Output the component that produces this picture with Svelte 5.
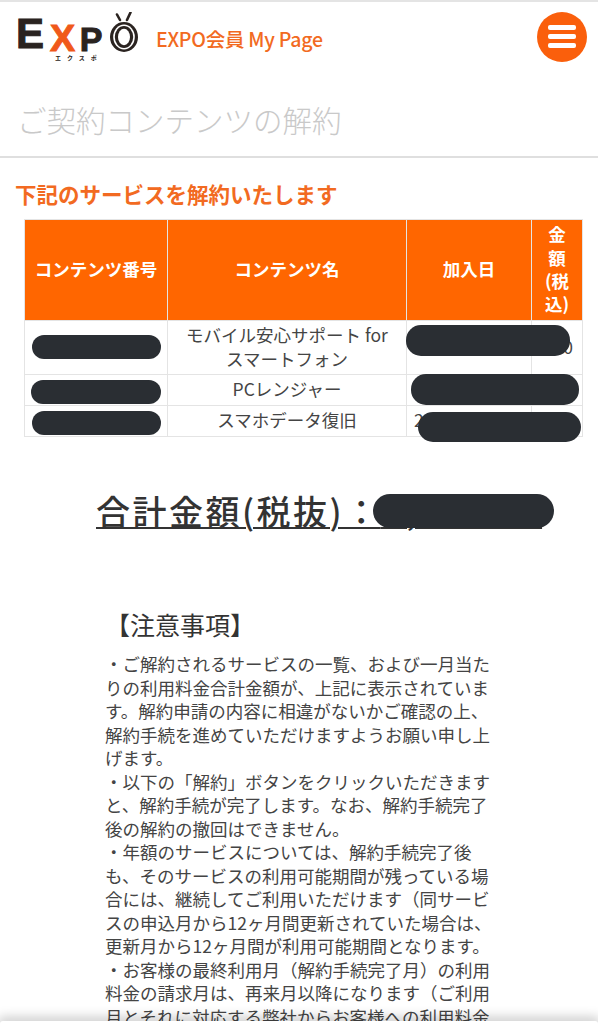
<script>
  const heads = ['コンテンツ番号', 'コンテンツ名', '加入日', '金額(税込)'];
  const rows = [
    { name: 'モバイル安心サポート for スマートフォン', date: '', price: '0', cls: 'tall' },
    { name: 'PCレンジャー', date: '', price: '', cls: 'short' },
    { name: 'スマホデータ復旧', date: '2', price: '', cls: 'short' }
  ];
  const notes = [
    '・ご解約されるサービスの一覧、および一月当たりの利用料金合計金額が、上記に表示されています。解約申請の内容に相違がないかご確認の上、解約手続を進めていただけますようお願い申し上げます。',
    '・以下の「解約」ボタンをクリックいただきますと、解約手続が完了します。なお、解約手続完了後の解約の撤回はできません。',
    '・年額のサービスについては、解約手続完了後も、そのサービスの利用可能期間が残っている場合には、継続してご利用いただけます（同サービスの申込月から12ヶ月間更新されていた場合は、更新月から12ヶ月間が利用可能期間となります。',
    '・お客様の最終利用月（解約手続完了月）の利用料金の請求月は、再来月以降になります（ご利用月とそれに対応する弊社からお客様への利用料金'
  ];
</script>

<div class="page">
  <header class="top">
    <div class="logo">
      <div class="word">
        <span class="l e">E</span><span class="l x">X</span><span class="l p">P</span>
        <svg class="o" width="28" height="40" viewBox="0 0 28 40" aria-hidden="true">
          <path d="M7 2.5L10 8M20.5 0.5L17 8" stroke="#2a2320" stroke-width="2.6" fill="none" stroke-linecap="round" />
          <ellipse cx="14" cy="25" rx="14" ry="15" fill="#2a2320" />
          <ellipse cx="14" cy="25" rx="10.8" ry="12.4" fill="#fff" />
          <ellipse cx="14" cy="25" rx="9.2" ry="11" fill="#2a2320" />
          <ellipse cx="14" cy="25" rx="6" ry="8.2" fill="#fff" />
        </svg>
      </div>
      <span class="kana">エクスポ</span>
    </div>
    <span class="mypage">EXPO会員 My Page</span>
    <button class="menu" aria-label="menu">
      <span></span><span></span><span></span>
    </button>
  </header>

  <h1 class="title">ご契約コンテンツの解約</h1>

  <h2 class="lead">下記のサービスを解約いたします</h2>

  <div class="table-wrap">
    <table>
      <colgroup>
        <col class="c1" /><col class="c2" /><col class="c3" /><col class="c4" />
      </colgroup>
      <thead>
        <tr>
          {#each heads as h}<th>{h}</th>{/each}
        </tr>
      </thead>
      <tbody>
        {#each rows as r}
          <tr class={r.cls}>
            <td></td>
            <td>{r.name}</td>
            <td class="date">{r.date}</td>
            <td class="price">{r.price}</td>
          </tr>
        {/each}
      </tbody>
    </table>
    <i class="blob b1"></i>
    <i class="blob b2"></i>
    <i class="blob b3"></i>
    <i class="blob b4"></i>
    <i class="blob b5"></i>
    <i class="blob b6"></i>
  </div>

  <div class="total">
    <p>合計金額(税抜)：<span class="hidden">0,000円</span></p>
    <i class="blob b7"></i>
  </div>

  <section class="notes">
    <h3>【注意事項】</h3>
    {#each notes as n}<p>{n}</p>{/each}
  </section>

  <div class="shade"></div>
</div>

<style>
  :global(body) {
    margin: 0;
    background: #fff;
  }
  .page {
    position: relative;
    width: 598px;
    height: 1024px;
    overflow: hidden;
    font-family: "Noto Sans CJK JP", "Noto Sans", sans-serif;
    color: #333;
    background: #fff;
  }
  .top {
    display: flex;
    align-items: flex-start;
    height: 78px;
    box-sizing: border-box;
    border-top: 2px solid #e4e4e4;
    padding: 0 11px 0 18px;
  }
  .logo {
    width: 120px;
    position: relative;
    flex: none;
  }
  .word {
    display: flex;
    align-items: flex-start;
    height: 52px;
    font-family: "Liberation Sans", sans-serif;
    font-weight: 700;
    color: #2a2320;
  }
  .l {
    display: block;
    flex: none;
    line-height: 0.7;
    -webkit-text-stroke: 1px currentColor;
  }
  .e {
    font-size: 42px;
    margin: 17px 0 0 -2px;
  }
  .x {
    color: #f0591a;
    font-size: 37.7px;
    margin: 22.6px 0 0 6px;
  }
  .p {
    font-size: 34px;
    margin: 25.7px 0 0 4.5px;
  }
  .o {
    margin: 10px 0 0 8px;
    flex: none;
  }
  .kana {
    position: absolute;
    left: 37px;
    top: 53px;
    font-size: 6px;
    line-height: 6px;
    font-weight: 700;
    letter-spacing: 6px;
    color: #2a2320;
    white-space: nowrap;
  }
  .mypage {
    margin-top: 23px;
    margin-left: 18px;
    color: #f26a21;
    font-size: 19.5px;
    line-height: 27px;
    font-weight: 500;
    letter-spacing: -0.25px;
    white-space: nowrap;
  }
  .menu {
    margin-left: auto;
    margin-top: 10px;
    width: 50px;
    height: 50px;
    border-radius: 50%;
    border: 0;
    padding: 0 0 1px;
    background: #fa5f0c;
    display: flex;
    flex-direction: column;
    align-items: center;
    justify-content: center;
    gap: 4.5px;
  }
  .menu span {
    width: 28px;
    height: 4.5px;
    border-radius: 2px;
    background: #fff;
  }
  .title {
    margin: 0;
    height: 80px;
    box-sizing: border-box;
    border-bottom: 2px solid #dfdfdf;
    padding: 19px 0 0 17px;
    font-size: 29.5px;
    line-height: 44px;
    font-weight: 300;
    color: #c9c9c9;
    white-space: nowrap;
  }
  .lead {
    margin: 22px 0 0 15px;
    height: 28px;
    font-size: 21.5px;
    line-height: 28px;
    font-weight: 700;
    color: #f26a21;
    white-space: nowrap;
  }
  .table-wrap {
    position: relative;
    margin: 11px 0 0 24px;
    width: 558px;
    height: 218px;
  }
  table {
    border-collapse: collapse;
    table-layout: fixed;
    width: 558px;
    font-size: 17.5px;
    text-align: center;
  }
  .c1 { width: 143px; }
  .c2 { width: 239px; }
  .c3 { width: 125px; }
  .c4 { width: 51px; }
  th, td {
    border: 1.5px solid #e4e4e4;
    padding: 0 9px 2px;
    font-weight: 400;
    color: #444;
  }
  th {
    height: 98px;
    background: #ff6600;
    color: #fff;
    font-size: 17.5px;
    font-weight: 700;
    line-height: 23.4px;
    padding: 0 0 2px;
  }
  th:last-child {
    padding: 0 9px 2px;
  }
  td {
    line-height: 23.5px;
  }
  .tall td { height: 51px; }
  .short td { height: 28px; }
  .date { text-align: left; padding-left: 7px; }
  .price { text-align: right; }
  .blob {
    position: absolute;
    display: block;
    background: #2a2e33;
    border-radius: 12px;
  }
  .b1 { left: 8px; top: 116px; width: 129px; height: 24px; }
  .b2 { left: 382px; top: 106px; width: 164px; height: 31px; border-radius: 15px; }
  .b3 { left: 7px; top: 161px; width: 130px; height: 24px; }
  .b4 { left: 387px; top: 155px; width: 168px; height: 31px; border-radius: 15px; }
  .b5 { left: 8px; top: 192px; width: 129px; height: 24px; }
  .b6 { left: 394px; top: 193px; width: 163px; height: 30px; border-radius: 15px; }
  .total {
    position: relative;
    margin-top: 49px;
    height: 55px;
  }
  .total p {
    margin: 0 0 0 96px;
    font-size: 34px;
    line-height: 50px;
    font-weight: 500;
    letter-spacing: 2.5px;
    color: #333;
    text-decoration: underline;
    text-decoration-thickness: 2px;
    text-underline-offset: 2px;
    white-space: nowrap;
  }
  .hidden {
    font-size: 30px;
    letter-spacing: 9px;
  }
  .b7 { left: 373px; top: 8px; width: 181px; height: 34px; border-radius: 17px; }
  h3 {
    margin: 0 0 10px 0;
    font-size: 25px;
    line-height: 36px;
    font-weight: 400;
    color: #333;
    white-space: nowrap;
  }
  .notes {
    margin: 65px 0 0 105px;
    width: 395px;
  }
  .notes p {
    margin: 0;
    font-size: 17.5px;
    line-height: 23.5px;
    color: #444;
  }
  .shade {
    position: absolute;
    left: 0;
    right: 0;
    bottom: 0;
    height: 3px;
    background: #fff;
    border-radius: 8px 8px 0 0;
    box-shadow: 0 0 12px 3px rgba(0, 0, 0, 0.25);
  }
</style>
